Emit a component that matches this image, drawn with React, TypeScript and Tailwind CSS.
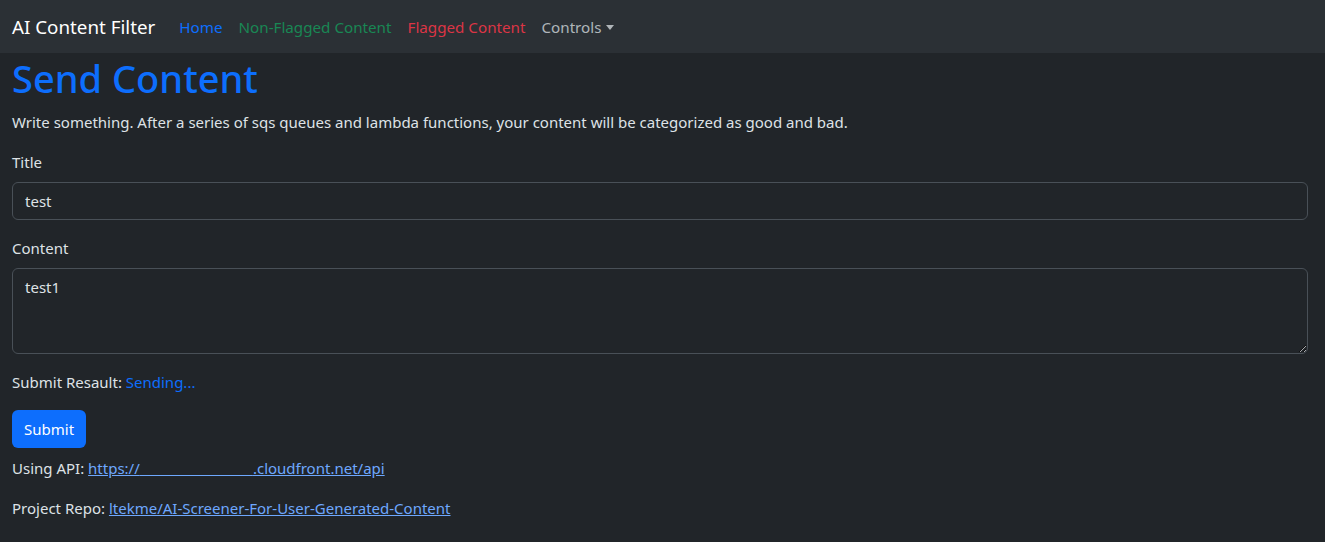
export default function App() {
  return (
    <div
      className="min-h-[542px] bg-[#212529] text-[#dee2e6] text-[15px] leading-6"
      style={{ fontFamily: '"Noto Sans", "Open Sans", sans-serif' }}
    >
      {/* Navbar */}
      <nav className="h-[53px] bg-[#2b3035] flex items-center px-3">
        <span className="text-[18.8px] leading-[30px] text-white mr-4">AI Content Filter</span>
        <div className="flex items-center text-[15.2px]">
          <a className="px-2 text-[#0d6efd]">Home</a>
          <a className="px-2 text-[#198754]">Non-Flagged Content</a>
          <a className="px-2 text-[#dc3545]">Flagged Content</a>
          <a className="px-2 text-[#dee2e6]/75 flex items-center">
            Controls
            <span className="ml-[5px] mt-[1px] w-0 h-0 border-x-[4px] border-x-transparent border-t-[5px] border-t-[#dee2e6]/75" />
          </a>
        </div>
      </nav>

      {/* Body */}
      <main className="pl-3 pr-[17px] pt-px">
        <h1 className="text-[38px] leading-[48px] font-medium text-[#0d6efd] mb-2">Send Content</h1>
        <p className="mb-4">
          Write something. After a series of sqs queues and lambda functions, your content will be categorized as good and bad.
        </p>

        <label className="block mb-2">Title</label>
        <input
          readOnly
          value="test"
          className="block w-full h-[38px] mb-4 px-3 py-1.5 bg-[#212529] border border-[#495057] rounded-md text-[#dee2e6] outline-none"
        />

        <label className="block mb-2">Content</label>
        <textarea
          readOnly
          rows={3}
          value="test1"
          className="block w-full h-[86px] mb-4 px-3 py-1.5 bg-[#212529] border border-[#495057] rounded-md text-[#dee2e6] outline-none"
        />

        <p className="mb-4">
          Submit Resault: <span className="text-[#0d6efd]">Sending...</span>
        </p>

        <button className="h-[38px] px-3 rounded-md bg-[#0d6efd] text-white mb-2">Submit</button>

        <p className="mb-4">
          Using API:{" "}
          <a className="text-[#6ea8fe] underline">
            https://{"\u00a0".repeat(29)}.cloudfront.net/api
          </a>
        </p>
        <p>
          Project Repo:{" "}
          <a className="text-[#6ea8fe] underline">ltekme/AI-Screener-For-User-Generated-Content</a>
        </p>
      </main>
    </div>
  );
}
